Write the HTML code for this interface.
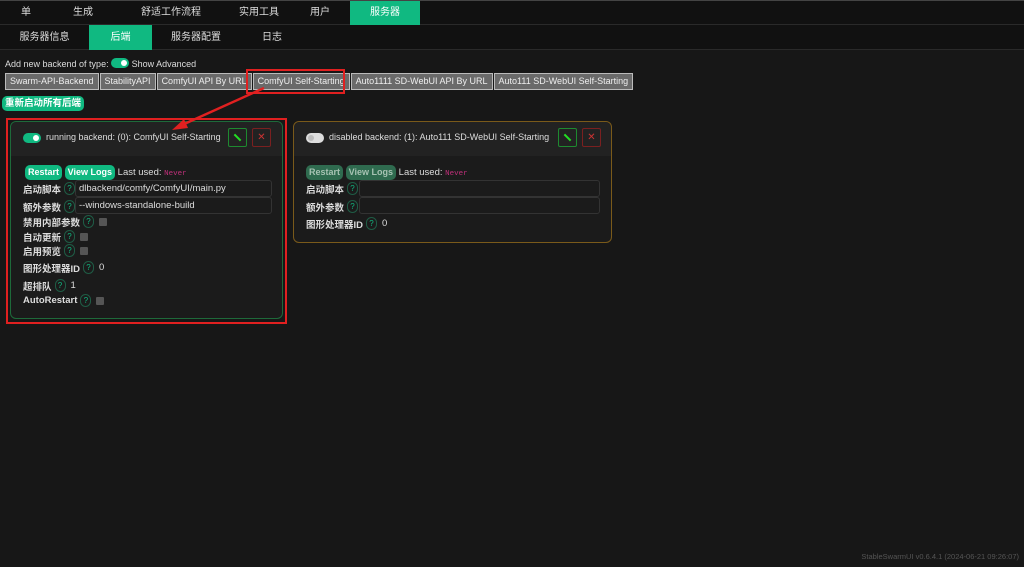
<!DOCTYPE html>
<html><head><meta charset="utf-8"><style>
*{box-sizing:border-box;margin:0;padding:0}
body{width:1024px;height:567px;background:#171717;color:#ddd;font-family:"Liberation Sans","Noto Sans CJK SC",sans-serif;font-size:10px;position:relative;overflow:hidden}
.nav{position:absolute;left:0;height:25px;display:flex;width:1024px;border-bottom:1px solid #2a2a2a}
.nav div{height:25px;line-height:25px;text-align:center;font-size:10px;color:#ddd}
.nav .a{background:#10b981;color:#fff}
.tb{position:absolute;top:73px;left:5px;display:flex}
.tb div{background:#6a6a6a;border:1px solid #bbb;color:#eee;height:17px;line-height:15px;padding:0 4px;font-size:9px;margin-right:1px}
.card{position:absolute;border-radius:6px;background:#1b1b1b}
.hd{height:34px;background:#222;border-radius:6px 6px 0 0;position:relative}
.tg{position:absolute;top:11px;width:18px;height:10px;border-radius:5px}
.tg i{position:absolute;top:2px;width:6px;height:6px;border-radius:3px;background:#fff}
.ht{position:absolute;top:10px;font-size:9px}
.bt{position:absolute;top:6px;width:19px;height:19px;border-radius:2px}
.gb{display:inline-block;background:#10b981;color:#fff;font-weight:bold;border-radius:5px;padding:0 3px;height:15px;line-height:15px;font-size:9px}
.dgb{background:#2f6b4f;color:#a7c3b3}
.row{position:absolute;left:12px;font-weight:bold;font-size:9.5px;display:flex;align-items:center;height:15px}
.q{display:inline-block;width:11px;height:13px;border:1px solid #1f5c45;border-radius:6px;color:#10b981;font-size:8px;text-align:center;line-height:11px;margin-left:3px;font-weight:normal}
.cb{display:inline-block;width:8px;height:8px;background:#555;border-radius:1px;margin-left:5px}
.inp{position:absolute;height:17px;border:1px solid #333;background:#1b1b1b;border-radius:3px;font-size:9.5px;padding-left:3px;line-height:15px;color:#ddd}
.nv{color:#c0307a;font-family:"Liberation Mono",monospace;font-size:7.5px}
</style></head><body>
<div class="nav" style="top:0;background:#111">
<div style="width:52px">单</div><div style="width:62px">生成</div><div style="width:114px">舒适工作流程</div><div style="width:62px">实用工具</div><div style="width:60px">用户</div><div class="a" style="width:70px">服务器</div></div>
<div style="position:absolute;top:0;left:0;width:1024px;height:1px;background:#444"></div>
<div class="nav" style="top:25px;background:#111">
<div style="width:89px">服务器信息</div><div class="a" style="width:63px">后端</div><div style="width:88px">服务器配置</div><div style="width:64px">日志</div></div>
<div style="position:absolute;top:58px;left:5px;font-size:9px">Add new backend of type: <span style="display:inline-block;width:18px;height:10px;border-radius:5px;background:#10b981;vertical-align:-1px;position:relative"><i style="position:absolute;right:2px;top:2px;width:6px;height:6px;border-radius:3px;background:#fff"></i></span> Show Advanced</div>
<div class="tb"><div>Swarm-API-Backend</div><div>StabilityAPI</div><div>ComfyUI API By URL</div><div>ComfyUI Self-Starting</div><div>Auto1111 SD-WebUI API By URL</div><div>Auto111 SD-WebUI Self-Starting</div></div>
<div style="position:absolute;left:246px;top:69px;width:99px;height:25px;border:2px solid #e02020"></div>
<div class="gb" style="position:absolute;left:2px;top:96px;font-size:9.5px">重新启动所有后端</div>

<div style="position:absolute;left:6px;top:118px;width:281px;height:206px;border:2px solid #e02020"></div>
<div class="card" style="left:10px;top:121px;width:273px;height:198px;border:1px solid #1e6a3a">
<div class="hd"><div class="tg" style="left:12px;background:#10b981"><i style="right:2px"></i></div>
<div class="ht" style="left:35px">running backend: (0): ComfyUI Self-Starting</div>
<svg class="bt" style="left:217px;border:1px solid #1e8a30" viewBox="0 0 19 19"><line x1="6" y1="6" x2="13" y2="13" stroke="#2d2" stroke-width="2.2"/></svg>
<div class="bt" style="left:241px;border:1px solid #7a2020;color:#c33;text-align:center;line-height:17px">✕</div></div>
<div style="position:absolute;top:43px;left:14px;font-size:9.5px"><span class="gb">Restart</span> <span class="gb">View Logs</span> Last used: <span class="nv">Never</span></div>
<div class="row" style="top:59px">启动脚本<span class="q">?</span></div><div class="inp" style="left:64px;top:58px;width:197px">dlbackend/comfy/ComfyUI/main.py</div>
<div class="row" style="top:77px">额外参数<span class="q">?</span></div><div class="inp" style="left:64px;top:75px;width:197px">--windows-standalone-build</div>
<div class="row" style="top:92px">禁用内部参数<span class="q">?</span><span class="cb"></span></div>
<div class="row" style="top:107px">自动更新<span class="q">?</span><span class="cb"></span></div>
<div class="row" style="top:121px">启用预览<span class="q">?</span><span class="cb"></span></div>
<div class="row" style="top:138px">图形处理器ID<span class="q">?</span><span style="font-weight:normal;margin-left:5px">0</span></div>
<div class="row" style="top:156px">超排队<span class="q">?</span><span style="font-weight:normal;margin-left:5px">1</span></div>
<div class="row" style="top:171px">AutoRestart<span class="q">?</span><span class="cb"></span></div>
</div>

<div class="card" style="left:293px;top:121px;width:319px;height:122px;border:1px solid #7a5a1a">
<div class="hd"><div class="tg" style="left:12px;background:#ddd"><i style="left:2px;background:#bbb"></i></div>
<div class="ht" style="left:35px">disabled backend: (1): Auto111 SD-WebUI Self-Starting</div>
<svg class="bt" style="left:264px;border:1px solid #1e8a30" viewBox="0 0 19 19"><line x1="6" y1="6" x2="13" y2="13" stroke="#2d2" stroke-width="2.2"/></svg>
<div class="bt" style="left:288px;border:1px solid #7a2020;color:#c33;text-align:center;line-height:17px">✕</div></div>
<div style="position:absolute;top:43px;left:12px;font-size:9.5px"><span class="gb dgb">Restart</span> <span class="gb dgb">View Logs</span> Last used: <span class="nv">Never</span></div>
<div class="row" style="top:59px;left:12px">启动脚本<span class="q">?</span></div><div class="inp" style="left:65px;top:58px;width:241px"></div>
<div class="row" style="top:77px;left:12px">额外参数<span class="q">?</span></div><div class="inp" style="left:65px;top:75px;width:241px"></div>
<div class="row" style="top:94px;left:12px">图形处理器ID<span class="q">?</span><span style="font-weight:normal;margin-left:5px">0</span></div>
</div>

<svg style="position:absolute;left:0;top:0" width="1024" height="567"><line x1="264" y1="88" x2="182" y2="125" stroke="#e02020" stroke-width="2.5"/><polygon points="172,130 184,119 188,128" fill="#e02020"/></svg>
<div style="position:absolute;right:5px;bottom:6px;font-size:7.5px;color:#555">StableSwarmUI v0.6.4.1 (2024-06-21 09:26:07)</div>
</body></html>
